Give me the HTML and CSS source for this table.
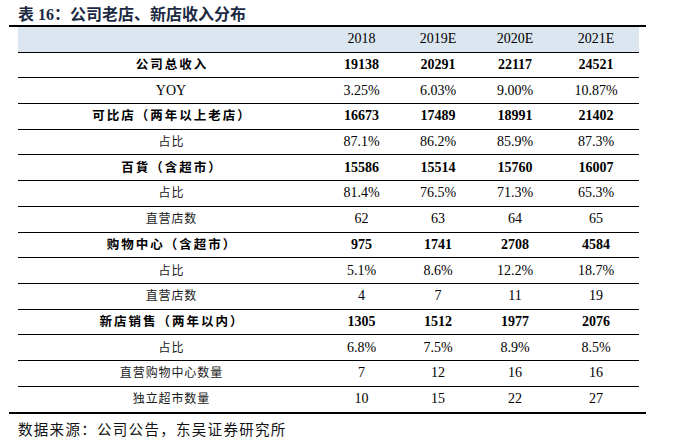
FILE: index.html
```html
<!DOCTYPE html>
<html lang="zh-CN">
<head>
<meta charset="utf-8">
<title>表 16：公司老店、新店收入分布</title>
<link rel="stylesheet" href="styles.css">
</head>
<body>
<div class="page">
  <div class="title">表 16：公司老店、新店收入分布</div>
  <div class="frame">
    <div class="table">
      <div class="row head">
        <div class="cell label"></div>
        <div class="cell">2018</div>
        <div class="cell">2019E</div>
        <div class="cell">2020E</div>
        <div class="cell">2021E</div>
      </div>
      <div class="row strong">
        <div class="cell label">公司总收入</div>
        <div class="cell">19138</div><div class="cell">20291</div><div class="cell">22117</div><div class="cell">24521</div>
      </div>
      <div class="row">
        <div class="cell label latin">YOY</div>
        <div class="cell">3.25%</div><div class="cell">6.03%</div><div class="cell">9.00%</div><div class="cell">10.87%</div>
      </div>
      <div class="row strong">
        <div class="cell label">可比店（两年以上老店）</div>
        <div class="cell">16673</div><div class="cell">17489</div><div class="cell">18991</div><div class="cell">21402</div>
      </div>
      <div class="row">
        <div class="cell label">占比</div>
        <div class="cell">87.1%</div><div class="cell">86.2%</div><div class="cell">85.9%</div><div class="cell">87.3%</div>
      </div>
      <div class="row strong">
        <div class="cell label">百貨（含超市）</div>
        <div class="cell">15586</div><div class="cell">15514</div><div class="cell">15760</div><div class="cell">16007</div>
      </div>
      <div class="row">
        <div class="cell label">占比</div>
        <div class="cell">81.4%</div><div class="cell">76.5%</div><div class="cell">71.3%</div><div class="cell">65.3%</div>
      </div>
      <div class="row">
        <div class="cell label">直营店数</div>
        <div class="cell">62</div><div class="cell">63</div><div class="cell">64</div><div class="cell">65</div>
      </div>
      <div class="row strong">
        <div class="cell label">购物中心（含超市）</div>
        <div class="cell">975</div><div class="cell">1741</div><div class="cell">2708</div><div class="cell">4584</div>
      </div>
      <div class="row">
        <div class="cell label">占比</div>
        <div class="cell">5.1%</div><div class="cell">8.6%</div><div class="cell">12.2%</div><div class="cell">18.7%</div>
      </div>
      <div class="row">
        <div class="cell label">直营店数</div>
        <div class="cell">4</div><div class="cell">7</div><div class="cell">11</div><div class="cell">19</div>
      </div>
      <div class="row strong">
        <div class="cell label">新店销售（两年以内）</div>
        <div class="cell">1305</div><div class="cell">1512</div><div class="cell">1977</div><div class="cell">2076</div>
      </div>
      <div class="row">
        <div class="cell label">占比</div>
        <div class="cell">6.8%</div><div class="cell">7.5%</div><div class="cell">8.9%</div><div class="cell">8.5%</div>
      </div>
      <div class="row">
        <div class="cell label">直营购物中心数量</div>
        <div class="cell">7</div><div class="cell">12</div><div class="cell">16</div><div class="cell">16</div>
      </div>
      <div class="row last">
        <div class="cell label">独立超市数量</div>
        <div class="cell">10</div><div class="cell">15</div><div class="cell">22</div><div class="cell">27</div>
      </div>
    </div>
  </div>
  <div class="source">数据来源：公司公告，东吴证券研究所</div>
</div>
</body>
</html>
```

FILE: styles.css
```css
html, body {
  margin: 0;
  padding: 0;
  background: #ffffff;
}

body {
  font-family: "Liberation Serif", "Noto Sans CJK SC", serif;
  color: #000000;
}

.page {
  width: 678px;
}

.title {
  padding: 4px 0 0 18px;
  height: 21px;
  line-height: 21px;
  font-size: 16px;
  font-weight: 700;
  color: #1b2943;
  white-space: nowrap;
}

.frame {
  margin-left: 9px;
  width: 637px;
  border-top: 2px solid #000000;
  border-bottom: 2px solid #000000;
  box-sizing: border-box;
}

.table {
  margin: 0 7px 0 9px;
}

.row {
  display: grid;
  grid-template-columns: 306px 75px 78px 76px 86px;
  height: 25.7px;
  box-sizing: border-box;
  border-bottom: 1px solid #000000;
  align-items: center;
}

.row.last {
  border-bottom: none;
}

.row.head {
  background: #dce6f1;
}

.cell {
  text-align: center;
  font-size: 14px;
  line-height: 18px;
  white-space: nowrap;
}

.label {
  font-size: 12px;
  letter-spacing: 0.9px;
  padding-left: 0.9px;
  color: #1a1a1a;
}

.label.latin {
  font-size: 14px;
  letter-spacing: 0;
  padding-left: 0;
  color: #000000;
}

.strong .cell {
  font-weight: 700;
}

.strong .label {
  font-size: 12.5px;
  letter-spacing: 2px;
  padding-left: 2px;
  color: #000000;
}

.source {
  margin: 5px 0 0 18px;
  font-size: 14.5px;
  line-height: 22px;
  letter-spacing: 1.3px;
  color: #111111;
  white-space: nowrap;
}
```
